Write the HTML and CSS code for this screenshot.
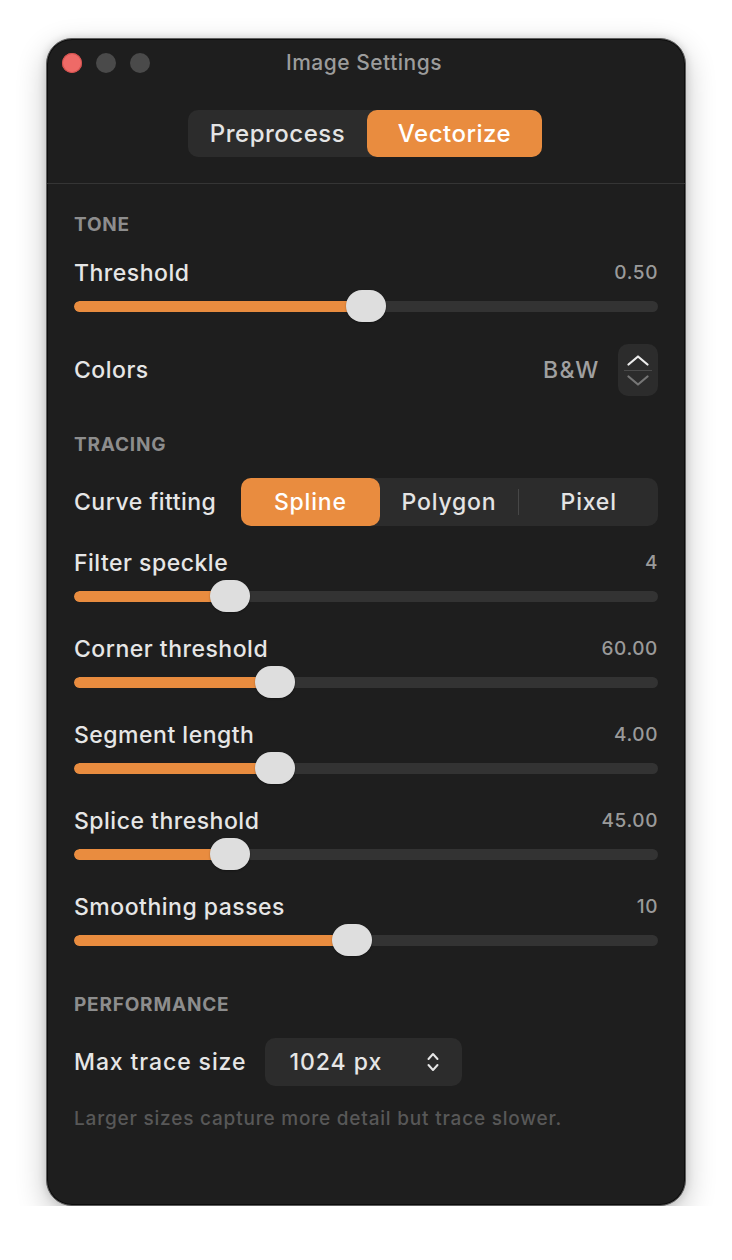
FILE: index.html
```html
<!DOCTYPE html>
<html lang="en">
<head>
<meta charset="utf-8">
<title>Image Settings</title>
<link rel="stylesheet" href="styles.css">
</head>
<body>
<div class="window">
  <header class="titlebar">
    <div class="lights">
      <span class="light close"></span>
      <span class="light"></span>
      <span class="light"></span>
    </div>
    <div class="title">Image Settings</div>
    <div></div>
  </header>
  <div class="tabs-wrap">
    <div class="tabs">
      <div class="tab tab-pre">Preprocess</div>
      <div class="tab tab-vec active">Vectorize</div>
    </div>
  </div>
  <div class="sep"></div>
  <main class="content">
    <h2 class="section first">TONE</h2>

    <div class="slider-row">
      <div class="slider-head"><span class="label">Threshold</span><span class="value">0.50</span></div>
      <div class="slider" style="--p:0.5"><div class="track"><div class="fill"></div></div><div class="thumb"></div></div>
    </div>

    <div class="row">
      <span class="label">Colors</span>
      <div class="row-right">
        <span class="stepper-value">B&amp;W</span>
        <div class="stepper">
          <svg class="chev up" width="24" height="12" viewBox="0 0 24 12"><path d="M2.5 10.5 L12 2.5 L21.5 10.5" fill="none" stroke="#ececec" stroke-width="2.2" stroke-linecap="round" stroke-linejoin="round"/></svg>
          <div class="stepper-div"></div>
          <svg class="chev down" width="24" height="12" viewBox="0 0 24 12"><path d="M2.5 1.5 L12 9.5 L21.5 1.5" fill="none" stroke="#767676" stroke-width="2.2" stroke-linecap="round" stroke-linejoin="round"/></svg>
        </div>
      </div>
    </div>

    <h2 class="section">TRACING</h2>

    <div class="row">
      <span class="label">Curve fitting</span>
      <div class="seg">
        <div class="seg-item active">Spline</div>
        <div class="seg-item">Polygon</div>
        <div class="seg-divider"></div>
        <div class="seg-item">Pixel</div>
      </div>
    </div>

    <div class="slider-row">
      <div class="slider-head"><span class="label">Filter speckle</span><span class="value">4</span></div>
      <div class="slider" style="--p:0.25"><div class="track"><div class="fill"></div></div><div class="thumb"></div></div>
    </div>

    <div class="slider-row">
      <div class="slider-head"><span class="label">Corner threshold</span><span class="value">60.00</span></div>
      <div class="slider" style="--p:0.3333"><div class="track"><div class="fill"></div></div><div class="thumb"></div></div>
    </div>

    <div class="slider-row">
      <div class="slider-head"><span class="label">Segment length</span><span class="value">4.00</span></div>
      <div class="slider" style="--p:0.3333"><div class="track"><div class="fill"></div></div><div class="thumb"></div></div>
    </div>

    <div class="slider-row">
      <div class="slider-head"><span class="label">Splice threshold</span><span class="value">45.00</span></div>
      <div class="slider" style="--p:0.25"><div class="track"><div class="fill"></div></div><div class="thumb"></div></div>
    </div>

    <div class="slider-row">
      <div class="slider-head"><span class="label">Smoothing passes</span><span class="value">10</span></div>
      <div class="slider" style="--p:0.4737"><div class="track"><div class="fill"></div></div><div class="thumb"></div></div>
    </div>

    <h2 class="section">PERFORMANCE</h2>

    <div class="row row-start">
      <span class="label label-wide">Max trace size</span>
      <div class="select">
        <span class="select-value">1024 px</span>
        <svg width="14" height="22" viewBox="0 0 14 22"><path d="M2.5 8 L7 3 L11.5 8 M2.5 14 L7 19 L11.5 14" fill="none" stroke="#e6e6e6" stroke-width="2" stroke-linecap="round" stroke-linejoin="round"/></svg>
      </div>
    </div>

    <p class="hint">Larger sizes capture more detail but trace slower.</p>
  </main>
</div>
</body>
</html>
```

FILE: styles.css
```css
* { box-sizing: border-box; }

html, body {
  margin: 0;
  padding: 0;
  background: #ffffff;
}

body {
  font-family: Inter, "Noto Sans", "Liberation Sans", sans-serif;
  padding: 38px 0 0 46px;
}

.window {
  width: 640px;
  height: 1168px;
  background: #1e1e1e;
  border: 1px solid #5e5e5e;
  border-radius: 26px;
  box-shadow: inset 0 0 0 1px #0c0c0c, 0 10px 30px rgba(0, 0, 0, 0.24), 0 0 8px rgba(0, 0, 0, 0.14);
  overflow: hidden;
  display: flex;
  flex-direction: column;
}

.titlebar {
  height: 46px;
  display: grid;
  grid-template-columns: 1fr auto 1fr;
  align-items: center;
}

.lights {
  display: flex;
  gap: 14px;
  padding-top: 2px;
  padding-left: 15px;
}

.light {
  width: 20px;
  height: 20px;
  border-radius: 50%;
  background: #4a4a4a;
}

.light.close {
  background: #ee6a67;
  box-shadow: inset 0 0 0 1px #d2504d;
}

.title {
  color: #9c9c9c;
  font-size: 21px;
  font-weight: 500;
  letter-spacing: 0.5px;
  padding-right: 4px;
}

.tabs-wrap {
  display: flex;
  justify-content: center;
  margin-top: 25px;
  padding-right: 2px;
}

.tabs {
  display: flex;
  height: 47px;
  background: #2c2c2c;
  border-radius: 10px;
}

.tab {
  display: flex;
  align-items: center;
  justify-content: center;
  font-size: 24px;
  font-weight: 500;
  letter-spacing: 0.5px;
  color: #e4e4e4;
  border-radius: 10px;
}

.tab-pre { width: 179px; }
.tab-vec { width: 175px; }

.tab.active {
  background: #e98c3f;
  color: #ffffff;
}

.sep {
  height: 1px;
  background: #353535;
  margin-top: 26px;
}

.content {
  display: flex;
  flex-direction: column;
  gap: 22px;
  padding: 30px 27px 0 27px;
}

.section {
  margin: 16px 0 0 0;
  font-size: 19px;
  line-height: 22px;
  font-weight: 700;
  color: #8d8d8d;
  letter-spacing: 0.8px;
}

.section.first { margin-top: 0; }

.label {
  font-size: 23px;
  font-weight: 500;
  letter-spacing: 0.5px;
  color: #e6e6e6;
  line-height: 28px;
}

.label-wide {
  letter-spacing: 0.9px;
}

.value {
  font-size: 19px;
  font-weight: 500;
  letter-spacing: 0.6px;
  color: #9a9a9a;
  line-height: 28px;
}

.slider-row {
  display: flex;
  flex-direction: column;
  gap: 4px;
}

.slider-head {
  display: flex;
  justify-content: space-between;
  align-items: center;
  height: 28px;
  margin-top: 1px;
  margin-bottom: -1px;
}

.slider {
  position: relative;
  height: 32px;
  display: flex;
  align-items: center;
}

.track {
  width: 100%;
  height: 11px;
  border-radius: 6px;
  background: #333333;
  overflow: hidden;
}

.fill {
  height: 100%;
  width: calc((100% - 40px) * var(--p) + 20px);
  background: #e98c3f;
  border-radius: 6px;
}

.thumb {
  position: absolute;
  top: 0;
  left: calc((100% - 40px) * var(--p));
  width: 40px;
  height: 32px;
  border-radius: 16px;
  background: #dedede;
  box-shadow: 0 1px 2px rgba(0, 0, 0, 0.3);
}

.row {
  display: flex;
  align-items: center;
  justify-content: space-between;
  min-height: 48px;
}

.row-start {
  justify-content: flex-start;
  gap: 19px;
}

.row-right {
  display: flex;
  align-items: center;
  gap: 18px;
}

.stepper-value {
  font-size: 23px;
  font-weight: 500;
  letter-spacing: 1.6px;
  color: #a0a0a0;
}

.stepper {
  width: 40px;
  height: 52px;
  border-radius: 10px;
  background: #2c2c2c;
  display: flex;
  flex-direction: column;
  align-items: center;
  justify-content: center;
  gap: 4px;
}

.stepper-div {
  width: 28px;
  height: 1px;
  background: #4a4a4a;
}

.seg {
  width: 417px;
  height: 48px;
  display: flex;
  align-items: center;
  background: #2c2c2c;
  border-radius: 10px;
}

.seg-item {
  flex: 1;
  height: 100%;
  display: flex;
  align-items: center;
  justify-content: center;
  font-size: 23px;
  font-weight: 500;
  letter-spacing: 0.8px;
  color: #e4e4e4;
  border-radius: 10px;
}

.seg-item.active {
  background: #e98c3f;
  color: #ffffff;
}

.seg-divider {
  width: 1px;
  height: 26px;
  background: #474747;
}

.select {
  width: 197px;
  height: 48px;
  background: #2c2c2c;
  border-radius: 10px;
  display: flex;
  align-items: center;
  justify-content: space-between;
  padding: 0 22px 0 24px;
  color: #e6e6e6;
}

.select-value {
  font-size: 23px;
  font-weight: 500;
  letter-spacing: 1px;
}

.hint {
  margin: 0;
  font-size: 19px;
  line-height: 22px;
  font-weight: 500;
  letter-spacing: 0.8px;
  color: #585858;
}
```
